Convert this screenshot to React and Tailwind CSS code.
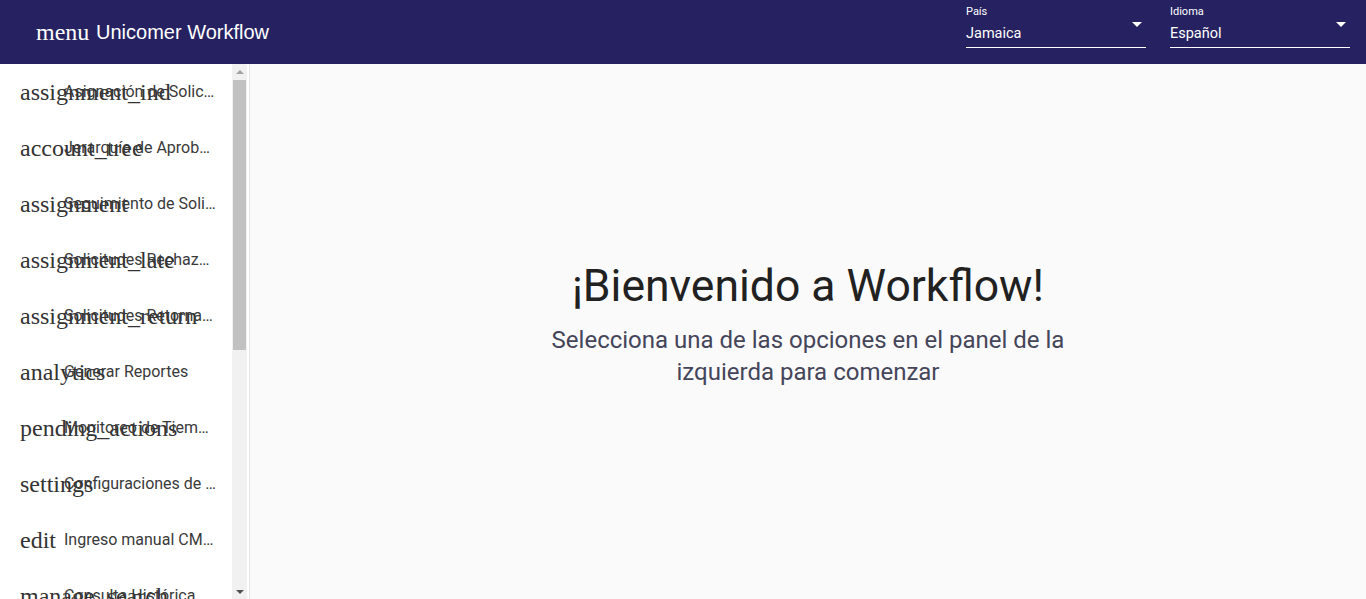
import React from "react"

const menuItems = [
  { icon: "assignment_ind", label: "Asignación de Solicitudes" },
  { icon: "account_tree", label: "Jerarquía de Aprobación" },
  { icon: "assignment", label: "Seguimiento de Solicitudes" },
  { icon: "assignment_late", label: "Solicitudes Rechazadas" },
  { icon: "assignment_return", label: "Solicitudes Retornadas" },
  { icon: "analytics", label: "Generar Reportes" },
  { icon: "pending_actions", label: "Monitoreo de Tiempos" },
  { icon: "settings", label: "Configuraciones de Sistema" },
  { icon: "edit", label: "Ingreso manual CMRs" },
  { icon: "manage_search", label: "Consulta Histórica" },
  { icon: "people", label: "Gestión de Usuarios" },
  { icon: "security", label: "Roles y Permisos" },
  { icon: "notifications", label: "Notificaciones" },
  { icon: "history", label: "Auditoría" },
  { icon: "list_alt", label: "Catálogos" },
  { icon: "tune", label: "Parámetros" },
  { icon: "help", label: "Ayuda" },
  { icon: "logout", label: "Cerrar Sesión" },
]

// select del header (País / Idioma)
const HeaderSelect = ({ label, value }) => (
  <div className="relative w-[180px] h-[48px] pt-[5px] text-white">
    <div className="text-[11px] leading-[14px] font-['Roboto',sans-serif]">{label}</div>
    <div className="mt-[5px] text-[14.5px] leading-[20px] font-['Roboto',sans-serif]">{value}</div>
    <div className="absolute left-0 right-0 top-[47px] h-px bg-white"></div>
    <div className="absolute right-[4px] top-[22px] w-0 h-0 border-l-[5px] border-r-[5px] border-t-[5px] border-l-transparent border-r-transparent border-t-white"></div>
  </div>
)

// barra de scroll clásica (dibujada)
const FakeScrollbar = () => (
  <div className="w-[15px] shrink-0 bg-[#f1f1f1] flex flex-col">
    <div className="h-[15px] flex items-center justify-center">
      <div className="w-0 h-0 border-l-[4px] border-r-[4px] border-b-[4px] border-l-transparent border-r-transparent border-b-[#a3a3a3]"></div>
    </div>
    <div className="flex-1 px-[1px] pt-[1px]">
      <div className="h-[270px] bg-[#c1c1c1]"></div>
    </div>
    <div className="h-[15px] flex items-center justify-center">
      <div className="w-0 h-0 border-l-[4px] border-r-[4px] border-t-[4px] border-l-transparent border-r-transparent border-t-[#505050]"></div>
    </div>
  </div>
)

export default function App() {
  return (
    <div className="w-[1366px] h-[599px] flex flex-col overflow-hidden bg-[#fafafa]">
      {/* Header */}
      <header className="h-16 shrink-0 bg-[#262261] flex items-center pl-6 pr-4">
        <button className="w-12 h-12 flex items-center pl-3 text-white whitespace-nowrap">
          <span className="text-[24px] leading-6 font-['Liberation_Serif',serif]">menu</span>
        </button>
        <h1 className="ml-6 text-white text-[20px] font-['Liberation_Sans',Arial,sans-serif]">Unicomer Workflow</h1>
        <div className="ml-auto flex gap-6 self-start">
          <HeaderSelect label="País" value="Jamaica" />
          <HeaderSelect label="Idioma" value="Español" />
        </div>
      </header>

      <div className="flex flex-1 min-h-0">
        {/* Sidebar */}
        <aside className="w-[250px] shrink-0 bg-white border-r border-[#e4e4e4] flex">
          <div className="w-[232px] shrink-0 overflow-hidden">
            {menuItems.map((item) => (
              <div key={item.icon} className="h-14 flex items-center pl-5 pr-4 cursor-pointer">
                <span className="w-6 shrink-0 whitespace-nowrap text-[24px] leading-6 text-[#333] font-['Liberation_Serif',serif]">
                  {item.icon}
                </span>
                <span className="ml-5 flex-1 min-w-0 truncate text-[16px] text-[#3a3a3a] font-['Roboto',sans-serif]">
                  {item.label}
                </span>
              </div>
            ))}
          </div>
          <FakeScrollbar />
        </aside>

        {/* Contenido principal */}
        <main className="flex-1 flex flex-col items-center justify-center pb-[16px] font-['Roboto',sans-serif]">
          <h2 className="text-[44.5px] leading-[52px] text-[#212121]">¡Bienvenido a Workflow!</h2>
          <p className="mt-[12px] w-[560px] text-center text-[24px] leading-[32px] text-[#45455a]">
            Selecciona una de las opciones en el panel de la izquierda para comenzar
          </p>
        </main>
      </div>
    </div>
  )
}
